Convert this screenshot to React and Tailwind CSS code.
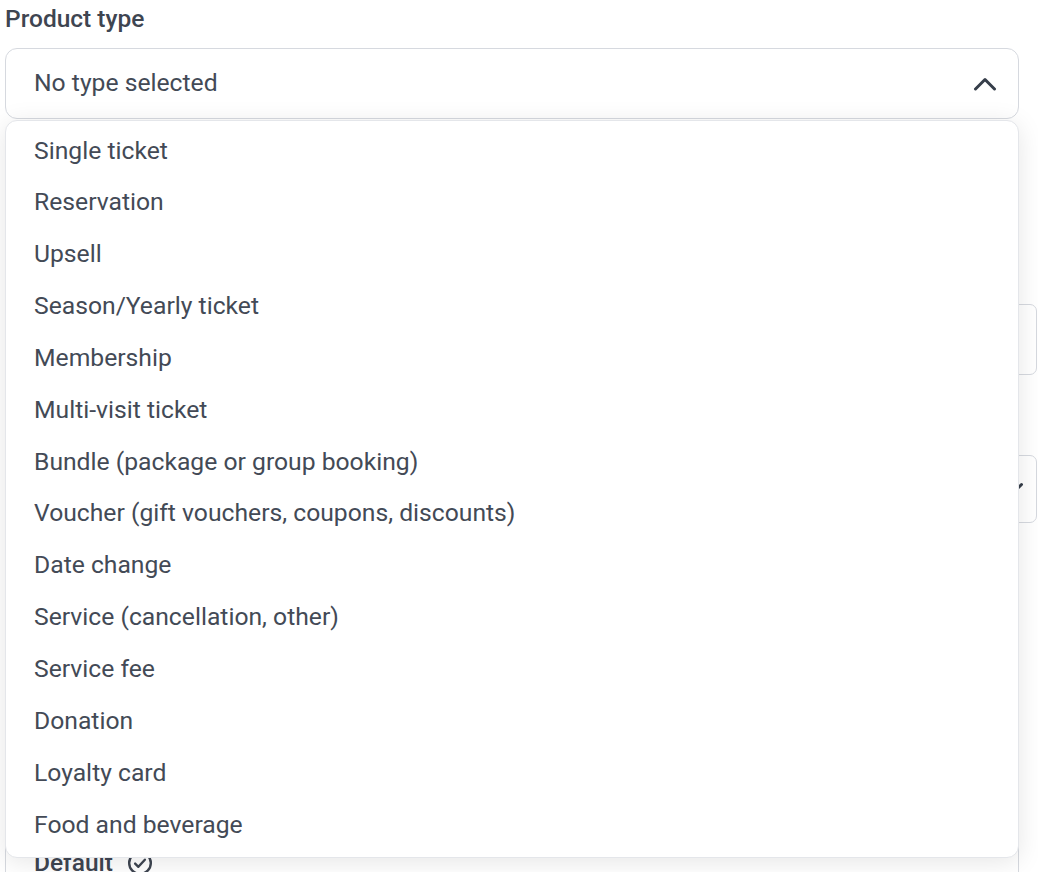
import React from "react";

const items = [
  "Single ticket",
  "Reservation",
  "Upsell",
  "Season/Yearly ticket",
  "Membership",
  "Multi-visit ticket",
  "Bundle (package or group booking)",
  "Voucher (gift vouchers, coupons, discounts)",
  "Date change",
  "Service (cancellation, other)",
  "Service fee",
  "Donation",
  "Loyalty card",
  "Food and beverage",
];

export default function App() {
  return (
    <div className="h-[872px] w-[1038px] overflow-hidden bg-white font-['Roboto',sans-serif] text-[#434a56]">
      <div className="pl-[5px] pt-[5px]">
        <label className="block text-[24.5px] font-medium leading-[28px] text-[#3e4551]">Product type</label>
        <div className="relative z-10 mt-[15px] w-[1014px]">
          <button className="flex h-[71px] w-full items-center justify-between rounded-[12px] border border-[#d6d9df] bg-white pl-[28px] pr-[21px] text-[24.7px] leading-none text-[#434a56]">
            <span>No type selected</span>
            <svg width="24" height="14" viewBox="0 0 24 14" fill="none">
              <polyline points="2.5,12 12,2.5 21.5,12" stroke="#363e4a" strokeWidth="3" strokeLinecap="round" strokeLinejoin="round" />
            </svg>
          </button>
          <div className="absolute left-0 top-[72px] w-full rounded-[12px] border border-[#e4e6ea] bg-white pt-[4px] pb-[6px] shadow-[0_4px_26px_rgba(0,0,0,0.10)]">
            {items.map((it) => (
              <div key={it} className="flex h-[51.85px] items-center pl-[28px] text-[24.7px] leading-none text-[#434a56]">
                {it}
              </div>
            ))}
          </div>
        </div>

        <div className="mt-[185px] h-[71px] w-[1032px] rounded-[7px] border border-[#d6d9df] bg-white"></div>

        <div className="mt-[80px] flex h-[68px] w-[1032px] items-center justify-end rounded-[7px] border border-[#d6d9df] bg-white pr-[12px]">
          <svg width="24" height="14" viewBox="0 0 24 14" fill="none">
            <polyline points="2.5,2.5 12,12 21.5,2.5" stroke="#363e4a" strokeWidth="3" strokeLinecap="round" strokeLinejoin="round" />
          </svg>
        </div>

        <div className="mt-[307px] h-[80px] w-[1014px] rounded-[12px] border border-[#d6d9df] bg-white pl-[28px] pt-[18px]">
          <div className="flex items-center gap-[14px] text-[24.5px] font-medium leading-[28px] text-[#3e4551]">
            <span>Default</span>
            <svg width="26" height="26" viewBox="0 0 24 24" fill="none">
              <circle cx="12" cy="12" r="10" stroke="#3e4551" strokeWidth="2.2" />
              <polyline points="7.5,12.5 10.5,15.5 16.5,9" stroke="#3e4551" strokeWidth="2.2" strokeLinecap="round" strokeLinejoin="round" />
            </svg>
          </div>
        </div>
      </div>
    </div>
  );
}
